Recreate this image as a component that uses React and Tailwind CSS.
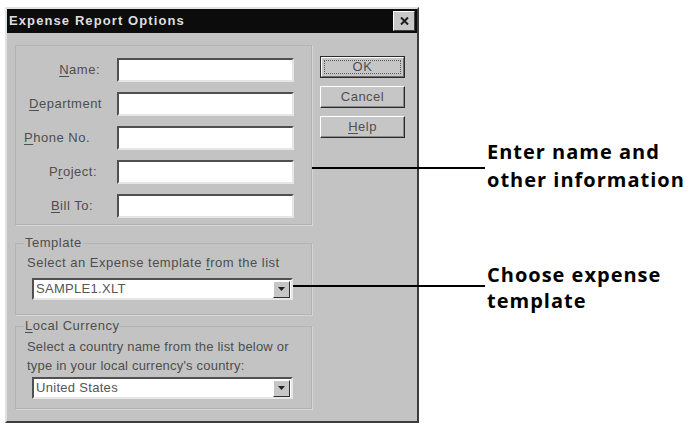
import React from "react";

const lbl = "text-[13px] leading-[16px] tracking-[0.5px] text-[#4e4e4e]";

function U({ children }) {
  return <span className="underline underline-offset-2 decoration-1">{children}</span>;
}

function Field() {
  return (
    <div className="h-[24px] w-[177px] bg-white border-2 border-t-[#505050] border-l-[#505050] border-b-[#e6e6e6] border-r-[#e6e6e6]" />
  );
}

function Combo({ text }) {
  return (
    <div className="ml-[8px] h-[22px] w-[261px] bg-white border-2 border-t-[#505050] border-l-[#505050] border-b-[#e6e6e6] border-r-[#e6e6e6] flex items-center justify-between">
      <span className="pl-[2px] text-[13px] leading-[16px] tracking-[0.3px] text-[#555555]">{text}</span>
      <div className="mr-[1px] h-[17px] w-[17px] bg-[#c6c6c6] border border-t-white border-l-white border-b-[#303030] border-r-[#303030] flex items-center justify-center">
        <svg width="7" height="4" viewBox="0 0 7 4">
          <path d="M0 0 H7 L3.5 4 Z" fill="#222" />
        </svg>
      </div>
    </div>
  );
}

function Btn({ children, def }) {
  if (def) {
    return (
      <div className="h-[22px] w-[85px] border border-[#2a2a2a]">
        <div className="h-full w-full bg-[#c6c6c6] border border-t-white border-l-white border-b-[#6e6e6e] border-r-[#6e6e6e] p-[2px]">
          <div className="h-full w-full border border-dotted border-[#555555] flex items-center justify-center text-[13px] leading-[16px] tracking-[0.5px] text-[#505050]">
            {children}
          </div>
        </div>
      </div>
    );
  }
  return (
    <div className="h-[22px] w-[85px] bg-[#c6c6c6] border border-t-white border-l-white border-b-[#2a2a2a] border-r-[#2a2a2a] shadow-[inset_-1px_-1px_0_#8a8a8a] flex items-center justify-center text-[13px] leading-[16px] tracking-[0.5px] text-[#505050]">
      {children}
    </div>
  );
}

export default function App() {
  return (
    <div
      className="relative w-[693px] h-[426px] bg-white overflow-hidden"
      style={{ fontFamily: '"Liberation Sans", Arial, sans-serif' }}
    >
      <div className="ml-[5px] mt-[7px] w-[414px] h-[416px] flex flex-col bg-[#c3c3c3] border-2 border-t-[#e2e2e2] border-l-[#e2e2e2] border-b-[#3c3c3c] border-r-[#3c3c3c]">
        {/* title bar */}
        <div className="h-[24px] bg-[#0c0c0c] flex items-center justify-between pl-[2px] pr-[2px]">
          <span className="text-[13px] font-bold tracking-[1.1px] text-[#dedede]">Expense Report Options</span>
          <div className="h-[20px] w-[22px] bg-[#c8c8c8] border border-t-white border-l-white border-b-[#404040] border-r-[#404040] flex items-center justify-center">
            <svg width="9" height="8" viewBox="0 0 9 8">
              <path d="M1 0.5 L8 7.5 M8 0.5 L1 7.5" stroke="#1e1e1e" strokeWidth="2" />
            </svg>
          </div>
        </div>

        {/* body */}
        <div className="flex flex-row flex-1">
          {/* left column */}
          <div className="w-[305px] flex flex-col">
            <div className="ml-[8px] mt-[12px] w-[297px] h-[180px] border border-[#b3b3b3] shadow-[1px_1px_0_#d6d6d6] pt-[12px]">
              <div className="grid grid-cols-[86px_177px] gap-x-[15px] gap-y-[10px] items-center">
                <div className={`${lbl} text-right pr-[2px]`}><U>N</U>ame:</div>
                <Field />
                <div className={`${lbl} text-right`}><U>D</U>epartment</div>
                <Field />
                <div className={`${lbl} text-right pr-[12px]`}><U>P</U>hone No.</div>
                <Field />
                <div className={`${lbl} text-right pr-[5px]`}>P<U>r</U>oject:</div>
                <Field />
                <div className={`${lbl} text-right pr-[9px]`}><U>B</U>ill To:</div>
                <Field />
              </div>
            </div>

            <fieldset className="ml-[8px] mt-[10px] w-[297px] border border-[#b3b3b3] shadow-[1px_1px_0_#d6d6d6] pl-[8px] pb-[14px]">
              <legend className={`${lbl} px-[1px]`}>Template</legend>
              <div className={`${lbl} mt-[4px] ml-[3px]`}>
                Select an Expense template <U>f</U>rom the list
              </div>
              <div className="mt-[7px]">
                <Combo text="SAMPLE1.XLT" />
              </div>
            </fieldset>

            <fieldset className="ml-[8px] mt-[3px] w-[297px] border border-[#b3b3b3] shadow-[1px_1px_0_#d6d6d6] pl-[8px] pb-[9px]">
              <legend className={`${lbl} px-[1px]`}><U>L</U>ocal Currency</legend>
              <div className="mt-[3px] ml-[3px] text-[13px] leading-[19px] tracking-[0.2px] text-[#4e4e4e]">
                Select a country name from the list below or
                <br />
                type in your local currency's country:
              </div>
              <div className="mt-[2px]">
                <Combo text="United States" />
              </div>
            </fieldset>
          </div>

          {/* right column */}
          <div className="flex flex-col gap-[8px] pl-[8px] pt-[23px]">
            <Btn def>OK</Btn>
            <Btn>Cancel</Btn>
            <Btn>
              <span><U>H</U>elp</span>
            </Btn>
          </div>
        </div>
      </div>

      {/* callouts */}
      <div className="absolute left-[312px] top-[167px] w-[173px] h-[2px] bg-black" />
      <div
        className="absolute left-[487px] top-[138px] text-[20px] leading-[28px] font-bold tracking-[1px] text-black"
        style={{ fontFamily: '"Open Sans", sans-serif' }}
      >
        Enter name and
        <br />
        other information
      </div>
      <div className="absolute left-[293px] top-[285px] w-[192px] h-[2px] bg-black" />
      <div
        className="absolute left-[487px] top-[262px] text-[20px] leading-[26px] font-bold tracking-[1px] text-black"
        style={{ fontFamily: '"Open Sans", sans-serif' }}
      >
        Choose expense
        <br />
        template
      </div>
    </div>
  );
}
